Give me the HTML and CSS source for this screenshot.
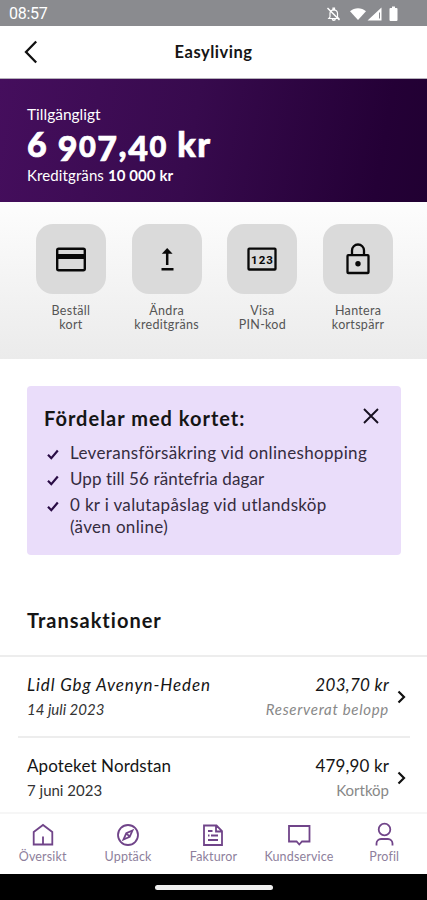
FILE: index.html
```html
<!DOCTYPE html>
<html lang="sv">
<head>
<meta charset="utf-8">
<meta name="viewport" content="width=device-width, initial-scale=1">
<title>Easyliving</title>
<link rel="stylesheet" href="styles.css">
</head>
<body>
<div class="app">
  <div class="status">
    <span class="clock">08:57</span>
    <svg class="status-icons" width="74" height="18" viewBox="0 0 74 18" fill="#fff">
      <path d="M4 12V8a3.800 3.800 0 0 1 7.500 0v4l1.200 1.500H2.800zM7 3.200h1.500v2H7zM6.300 14h3a1.500 1.500 0 0 1-3 0z" fill="none" stroke="#fff" stroke-width="1.200"/>
      <path d="M1.500 3 13.500 15" stroke="#fff" stroke-width="1.500"/>
      <path d="M24 6.300c4.500-4 11.500-4 16 0L32 15z"/>
      <path d="M55.500 2.500V15.500H41.500zM53 8v5.500h1V7z" fill-rule="evenodd"/>
      <path d="M64.500 3H66V1.500h3V3h1.500q1 0 1 1v11q0 1-1 1h-6q-1 0-1-1V4q0-1 1-1z"/>
    </svg>
  </div>
  <header class="bar">
    <svg class="back" width="14" height="24" viewBox="0 0 14 24"><path d="M12.200 1.500 2 12l10.200 10.500" fill="none" stroke="#111" stroke-width="2.300"/></svg>
    <h1 class="bar-title">Easyliving</h1>
  </header>
  <section class="hero">
    <div class="hero-label">Tillgängligt</div>
    <div class="amount">6 <span class="low">9</span><span class="small">0</span><span class="low">7</span>,<span class="low">4</span><span class="small">0</span> kr</div>
    <div class="limit">Kreditgräns <b>10 000 kr</b></div>
  </section>
  <section class="actions">
    <div class="action"><div class="tile"><svg width="70" height="70" viewBox="0 0 70 70"><rect x="21.200" y="24.700" width="27.600" height="21.600" rx="1.500" fill="none" stroke="#080808" stroke-width="2.400"/><path d="M21 30h28v5H21z" fill="#080808"/></svg></div><div class="action-label">Beställ<br>kort</div></div>
    <div class="action"><div class="tile"><svg width="70" height="70" viewBox="0 0 70 70" fill="none" stroke="#080808" stroke-width="2.500"><path d="M35.200 41V27M29.500 45.300H41.500"/><path d="M29.800 29.800 35.200 24l5.400 5.800z" fill="#080808" stroke="none"/></svg></div><div class="action-label">Ändra<br>kreditgräns</div></div>
    <div class="action"><div class="tile"><svg width="70" height="70" viewBox="0 0 70 70"><rect x="21.500" y="24.700" width="27" height="20.800" rx=".8" fill="none" stroke="#080808" stroke-width="2.300"/><text class="pin-digits" x="35.500" y="39.500">123</text></svg></div><div class="action-label">Visa<br>PIN-kod</div></div>
    <div class="action"><div class="tile"><svg width="70" height="70" viewBox="0 0 70 70" fill="none" stroke="#080808" stroke-width="2.300"><rect x="24.500" y="31.200" width="21" height="17.800" rx=".8"/><path d="M29 31v-4.500a6 6 0 0 1 12 0V31"/><circle cx="35" cy="39.800" r="2.700" fill="#080808" stroke="none"/></svg></div><div class="action-label">Hantera<br>kortspärr</div></div>
  </section>
  <section class="benefits">
    <div class="benefits-head">
      <h2 class="benefits-title">Fördelar med kortet:</h2>
      <svg class="close" width="16" height="16" viewBox="0 0 16 16"><path d="m1 1 14 14M15 1 1 15" stroke="#171020" stroke-width="1.900"/></svg>
    </div>
    <ul class="list">
      <li><svg class="check" width="12" height="11" viewBox="0 0 12 11"><path d="m1 5.700 3.300 3.500L10.800 1.500" fill="none" stroke="#2a0c45" stroke-width="2.200"/></svg><span class="wide">Leveransförsäkring vid onlineshopping</span></li>
      <li><svg class="check" width="12" height="11" viewBox="0 0 12 11"><path d="m1 5.700 3.300 3.500L10.800 1.500" fill="none" stroke="#2a0c45" stroke-width="2.200"/></svg><span>Upp till 56 räntefria dagar</span></li>
      <li><svg class="check" width="12" height="11" viewBox="0 0 12 11"><path d="m1 5.700 3.300 3.500L10.800 1.500" fill="none" stroke="#2a0c45" stroke-width="2.200"/></svg><span class="wide">0 kr i valutapåslag vid utlandsköp<br>(även online)</span></li>
    </ul>
  </section>
  <h2 class="tx-title">Transaktioner</h2>
  <section class="transactions">
    <div class="row pending">
      <div class="what"><div class="name">Lidl Gbg Avenyn-Heden</div><div class="date">14 juli 2023</div></div>
      <div class="cost"><div class="sum">203,70 kr</div><div class="kind">Reserverat belopp</div></div>
      <svg class="chev" width="9" height="14" viewBox="0 0 9 14"><path d="m1.500 1.500 5.500 5.500-5.500 5.500" fill="none" stroke="#111" stroke-width="2.200"/></svg>
    </div>
    <div class="row">
      <div class="what"><div class="name">Apoteket Nordstan</div><div class="date">7 juni 2023</div></div>
      <div class="cost"><div class="sum">479,90 kr</div><div class="kind">Kortköp</div></div>
      <svg class="chev" width="9" height="14" viewBox="0 0 9 14"><path d="m1.500 1.500 5.500 5.500-5.500 5.500" fill="none" stroke="#111" stroke-width="2.200"/></svg>
    </div>
  </section>
  <nav class="tabs">
    <div class="tab"><svg viewBox="0 0 26 26"><path d="M3.700 10 13 3l9.300 7v12.500H3.700zM13 22v-7.500"/></svg><span>Översikt</span></div>
    <div class="tab"><svg viewBox="0 0 26 26"><circle cx="13" cy="13" r="10"/><path d="m17.500 8.500-2.800 6.200-6.200 2.800 2.800-6.200zM11.300 11.300l3.400 3.400"/></svg><span>Upptäck</span></div>
    <div class="tab"><svg viewBox="0 0 26 26"><path d="M4 3.500h12.500l5.500 5.500v14H4zM16 4v5.500h5.500M8 9h4.500M8 13.500h1.500M11 13.500h7M8 18h10"/></svg><span>Fakturor</span></div>
    <div class="tab"><svg viewBox="0 0 26 26"><path d="M3 4h20.500v15.500H16l-2.700 3-2.700-3H3z"/></svg><span>Kundservice</span></div>
    <div class="tab"><svg viewBox="0 0 26 26"><circle cx="13.500" cy="7.500" r="5.800"/><path d="M5.500 23.500V21.500a4.500 4.500 0 0 1 4.500-4.500h7a4.500 4.500 0 0 1 4.500 4.500v2"/></svg><span>Profil</span></div>
  </nav>
  <div class="system"><div class="handle"></div></div>
</div>
</body>
</html>
```
FILE: styles.css
```css
* { box-sizing: border-box; margin: 0; padding: 0; }
body { font-family: Lato, "Open Sans", sans-serif; font-variant-ligatures: none; color: #151515; background: #fff; }
svg { display: block; flex: none; }
.app { width: 427px; height: 900px; display: flex; flex-direction: column; overflow: hidden; white-space: nowrap; }
.status { height: 26px; background: #8a8b8f; display: flex; justify-content: space-between; padding: 5px 27px 0 9px; color: #fff; }
.clock { font: 16px/18px Roboto, sans-serif; letter-spacing: -.3px; }
.bar { height: 53px; border-bottom: 1px solid #b5b0ba; display: grid; grid-template-columns: 60px 1fr 60px; align-items: center; }
.back { margin-left: 24px; }
.bar-title { font-size: 16.500px; line-height: 24px; font-weight: 700; text-align: center; letter-spacing: .5px; }
.hero { height: 123px; padding: 25px 27px 0; color: #fff; background: linear-gradient(100deg, #450e5d 0%, #370a4d 45%, #240036 88%, #210032 100%); }
.hero-label { font-size: 15.500px; line-height: 20px; }
.amount { font-size: 34px; line-height: 40px; height: 41px; font-weight: 900; letter-spacing: 1.500px; -webkit-text-stroke: .7px #fff; }
.low { position: relative; top: 4px; }
.small { font-size: 29px; }
.limit { font-size: 15px; line-height: 20px; letter-spacing: .1px; }
.actions { height: 157px; padding: 22px 21px 0 23px; display: grid; grid-template-columns: repeat(4, 1fr); background: linear-gradient(#fdfdfd, #ebebeb); }
.action { display: flex; flex-direction: column; align-items: center; }
.tile { width: 70px; height: 70px; border-radius: 17px; background: #dadada; }
.pin-digits { font: 700 11.500px Roboto, sans-serif; letter-spacing: 1px; text-anchor: middle; fill: #080808; }
.action-label { margin-top: 10px; font-size: 12.500px; line-height: 14px; color: #555; text-align: center; letter-spacing: .3px; }
.benefits { margin: 27px 26px 0 27px; height: 169px; padding: 19px 22px 0 17px; background: #eaddfa; border-radius: 4px; }
.benefits-head { display: flex; justify-content: space-between; }
.benefits-title { font-size: 20px; line-height: 26px; font-weight: 700; letter-spacing: 1px; }
.close { margin-top: 3px; }
.list { list-style: none; margin-top: 11px; font-size: 17px; line-height: 22px; letter-spacing: .1px; color: #352c3f; display: grid; gap: 4px; }
.list li { display: flex; gap: 11px; padding-left: 3px; }
.wide { letter-spacing: .34px; }
.check { margin-top: 7px; }
.tx-title { margin: 52px 0 0 27px; font-size: 20px; line-height: 26px; letter-spacing: 1px; }
.transactions { margin-top: 22px; height: 157px; border-top: 2px solid #ededed; flex: none; }
.row { height: 81px; margin: 0 17px 0 18px; padding: 16px 4px 0 9px; display: flex; border-bottom: 2px solid #ededed; }
.row + .row { border-bottom: 0; }
.what { flex: 1; }
.cost { text-align: right; margin-right: 8px; }
.name, .sum { font-size: 17px; line-height: 24px; letter-spacing: .12px; }
.date, .kind { font-size: 15px; line-height: 24px; color: #333; }
.kind { color: #888; }
.pending { font-style: italic; }
.pending .name { letter-spacing: .9px; }
.pending .sum { letter-spacing: .3px; }
.pending .kind { letter-spacing: .7px; }
.chev { margin-top: 17px; }
.tabs { height: 62px; border-top: 2px solid #f6f6f6; display: grid; grid-template-columns: repeat(5, 1fr); padding-top: 8px; }
.tab { display: flex; flex-direction: column; align-items: center; font-size: 12.500px; line-height: 16px; letter-spacing: .15px; color: #8e7f9c; }
.tab svg { width: 26px; height: 26px; margin-bottom: 1px; fill: none; stroke: #704489; stroke-width: 1.800; }
.system { height: 26px; background: #000; display: flex; justify-content: center; align-items: center; }
.handle { width: 118px; height: 5px; border-radius: 3px; background: #eee; }
```
